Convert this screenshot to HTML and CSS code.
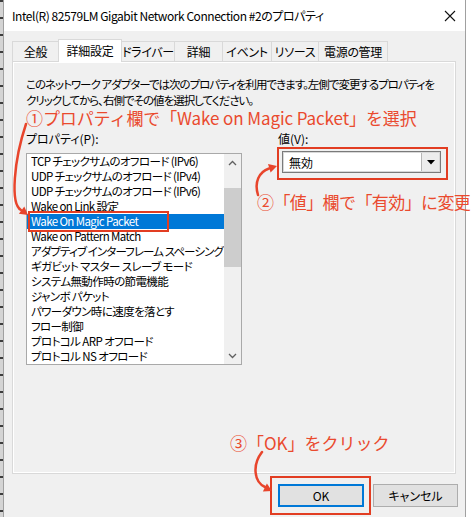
FILE: index.html
```html
<!DOCTYPE html>
<html lang="ja">
<head>
    <meta charset="UTF-8">
    <title>Intel(R) 82579LM Gigabit Network Connection #2のプロパティ</title>
    <link rel="stylesheet" href="styles.css">
</head>
<body>
    <div class="screen">
        <div class="edge"></div>
        <div class="dialog">
            <div class="titlebar">
                <span class="title">Intel(R) 82579LM Gigabit Network Connection #2のプロパティ</span>
                <svg class="close" width="12" height="12" viewBox="0 0 12 12">
                    <path d="M1 1 L11 11 M11 1 L1 11" stroke="#111" stroke-width="1.1" fill="none"/>
                </svg>
            </div>
            <div class="dialog-body">
                <div class="tabs">
                    <div class="tab t1">全般</div>
                    <div class="tab t2 active">詳細設定</div>
                    <div class="tab t3">ドライバー</div>
                    <div class="tab t4">詳細</div>
                    <div class="tab t5">イベント</div>
                    <div class="tab t6">リソース</div>
                    <div class="tab t7">電源の管理</div>
                </div>
                <div class="panel">
                    <p class="desc">このネットワーク アダプターでは次のプロパティを利用できます。左側で変更するプロパティを<br>クリックしてから、右側でその値を選択してください。</p>
                    <p class="note note-1">①プロパティ欄で「Wake on Magic Packet」を選択</p>
                    <div class="fields">
                        <div class="field-left">
                            <div class="label">プロパティ(P):</div>
                            <div class="listbox">
                                <ul class="items">
                                    <li>TCP チェックサムのオフロード (IPv6)</li>
                                    <li>UDP チェックサムのオフロード (IPv4)</li>
                                    <li>UDP チェックサムのオフロード (IPv6)</li>
                                    <li>Wake on Link 設定</li>
                                    <li class="selected">Wake On Magic Packet<span class="mark-item"></span></li>
                                    <li>Wake on Pattern Match</li>
                                    <li class="tight">アダプティブ インターフレーム スペーシング</li>
                                    <li>ギガビット マスター スレーブ モード</li>
                                    <li>システム無動作時の節電機能</li>
                                    <li>ジャンボ パケット</li>
                                    <li>パワーダウン時に速度を落とす</li>
                                    <li>フロー制御</li>
                                    <li>プロトコル ARP オフロード</li>
                                    <li>プロトコル NS オフロード</li>
                                </ul>
                                <div class="scrollbar">
                                    <div class="sb-btn">
                                        <svg width="9" height="6" viewBox="0 0 9 6"><path d="M1 5 L4.5 1.5 L8 5" stroke="#606060" stroke-width="1.3" fill="none"/></svg>
                                    </div>
                                    <div class="sb-track"><div class="sb-thumb"></div></div>
                                    <div class="sb-btn">
                                        <svg width="9" height="6" viewBox="0 0 9 6"><path d="M1 1 L4.5 4.5 L8 1" stroke="#606060" stroke-width="1.3" fill="none"/></svg>
                                    </div>
                                </div>
                            </div>
                        </div>
                        <div class="field-right">
                            <div class="label label-value">値(V):</div>
                            <div class="mark mark-combo">
                                <div class="combo">
                                    <span class="combo-text">無効</span>
                                    <span class="combo-btn">
                                        <svg width="8" height="5" viewBox="0 0 8 5"><path d="M0 0 H8 L4 4.5 Z" fill="#000"/></svg>
                                    </span>
                                </div>
                            </div>
                        </div>
                    </div>
                </div>
                <div class="buttons">
                    <div class="mark mark-ok">
                        <button class="btn btn-default">OK</button>
                    </div>
                    <button class="btn">キャンセル</button>
                </div>
            </div>
        </div>
        <div class="outside"></div>

        <!-- annotations drawn over the dialog -->
        <p class="note note-2">②「値」欄で「有効」に変更</p>
        <p class="note note-3">③「OK」をクリック</p>
        <svg class="arrows" width="474" height="517" viewBox="0 0 474 517">
            <g stroke="#e8452c" stroke-width="2.5" fill="none" stroke-linecap="round">
                <path d="M26 124 C14 160 10 204 21 210"/>
                <path d="M258 195 C254 182 259 172 269 168.5"/>
                <path d="M262 452 C252 465 254 482 265 487"/>
            </g>
            <g fill="#e8452c">
                <path d="M28 215 L18.9 213.8 L24.3 206.6 Z"/>
                <path d="M277 166 L270.6 172.6 L268 164 Z"/>
                <path d="M272 491 L262.9 491.4 L266.9 483.4 Z"/>
            </g>
        </svg>
    </div>
</body>
</html>
```

FILE: styles.css
```css
body {
    margin: 0;
    padding: 0;
    background-color: #fff;
    font-family: "Noto Sans CJK JP", sans-serif;
    font-size: 12px;
    color: #000;
}
.screen {
    position: relative;
    display: flex;
    width: 474px;
    height: 517px;
    overflow: hidden;
    background-color: #fff;
}
.edge {
    width: 3px;
    background: repeating-linear-gradient(#3d3d3d 0 2px, #d4d4d4 2px 17px);
}
.dialog {
    width: 463px;
    box-sizing: border-box;
    border-left: 1px solid #a0a0a0;
    border-right: 1px solid #a0a0a0;
    background-color: #f0f0f0;
    display: flex;
    flex-direction: column;
}
.outside {
    flex: 1;
    background-color: #fff;
}
.titlebar {
    height: 31px;
    background-color: #fff;
    display: flex;
    align-items: center;
    justify-content: space-between;
    padding: 0 8px 0 8px;
}
.title {
    font-size: 12px;
    font-feature-settings: "palt";
    letter-spacing: -0.45px;
    white-space: nowrap;
}
.close {
    margin-right: 1px;
}
.dialog-body {
    padding: 8px 9px 0 8px;
}

/* tabs */
.tabs {
    display: flex;
    align-items: flex-end;
    height: 22px;
    position: relative;
    z-index: 1;
}
.tab {
    box-sizing: border-box;
    height: 20px;
    border: 1px solid #d9d9d9;
    border-bottom: none;
    margin-left: -1px;
    background-color: #f0f0f0;
    display: flex;
    align-items: center;
    justify-content: center;
    font-feature-settings: "palt";
    letter-spacing: -0.3px;
    white-space: nowrap;
}
.tab.active {
    height: 23px;
    margin-bottom: -1px;
    background-color: #fff;
    position: relative;
    z-index: 2;
    padding-bottom: 1px;
}
.t1 { width: 47px; margin-left: 0; }
.t2 { width: 64px; }
.t3 { width: 54px; }
.t4 { width: 49px; }
.t5 { width: 50px; }
.t6 { width: 48px; }
.t7 { width: 70px; }

/* property page */
.panel {
    box-sizing: border-box;
    height: 413px;
    border: 1px solid #d9d9d9;
    box-shadow: inset 0 0 0 1px #fff;
    background-color: #f0f0f0;
    padding: 14px 13px 0 13px;
}
.desc {
    margin: 0;
    font-size: 11.5px;
    line-height: 16px;
    font-feature-settings: "palt";
    letter-spacing: -1px;
    white-space: nowrap;
}
.note {
    margin: 0;
    font-size: 17px;
    line-height: 18px;
    color: #ea4a2e;
    white-space: nowrap;
}
.note-1 {
    margin-top: 1px;
    letter-spacing: -0.1px;
}
.fields {
    display: grid;
    grid-template-columns: 216px 171px;
    column-gap: 35px;
    margin-top: 4px;
}
.label {
    line-height: 16px;
    font-feature-settings: "palt";
}
.label-value {
    padding-left: 1px;
}
.field-left .label {
    margin-bottom: 6px;
}

/* list box */
.listbox {
    box-sizing: border-box;
    height: 212px;
    border: 1px solid #a9a9a9;
    background-color: #fff;
    display: flex;
}
.items {
    flex: 1;
    list-style: none;
    margin: 0;
    padding: 0;
    overflow: hidden;
}
.items li {
    height: 15px;
    line-height: 15px;
    padding-left: 4px;
    font-size: 11.5px;
    white-space: nowrap;
    font-feature-settings: "palt";
    letter-spacing: -0.6px;
}
.items li.tight {
    letter-spacing: -0.9px;
}
.items li.selected {
    position: relative;
    background-color: #0078d7;
    color: #fff;
}
.mark-item {
    position: absolute;
    left: 1px;
    top: -3px;
    width: 141px;
    height: 21px;
    box-sizing: border-box;
    border: 2px solid #e23d22;
}
.scrollbar {
    width: 17px;
    background-color: #f0f0f0;
    display: flex;
    flex-direction: column;
}
.sb-btn {
    height: 17px;
    display: flex;
    align-items: center;
    justify-content: center;
}
.sb-track {
    flex: 1;
}
.sb-thumb {
    margin-top: 17px;
    height: 79px;
    background-color: #cdcdcd;
}

/* value combo */
.mark {
    border: 2px solid #e23d22;
}
.mark-combo {
    padding: 2px 5px 5px 3px;
}
.combo {
    box-sizing: border-box;
    height: 22px;
    border: 1px solid #7a7a7a;
    box-shadow: inset 0 0 0 1px #d8d8d8;
    background-color: #fff;
    display: flex;
    align-items: center;
    justify-content: space-between;
}
.combo-text {
    padding-left: 6px;
}
.combo-btn {
    width: 17px;
    height: 18px;
    margin-right: 1px;
    border-left: 1px solid #b5b5b5;
    background-color: #ececec;
    display: flex;
    align-items: center;
    justify-content: center;
}

/* dialog buttons */
.buttons {
    display: flex;
    justify-content: flex-end;
    align-items: center;
    margin-top: 2px;
    margin-right: -2px;
}
.mark-ok {
    padding: 6px 5px 6px 6px;
}
.btn {
    box-sizing: border-box;
    width: 85px;
    height: 23px;
    border: 1px solid #adadad;
    background-color: #e1e1e1;
    font-family: "Noto Sans CJK JP", sans-serif;
    font-size: 12px;
    font-feature-settings: "palt";
    padding: 0;
    margin-left: 2px;
}
.btn-default {
    width: 86px;
    margin-left: 0;
    border: 2px solid #0078d7;
}

/* annotation overlays */
.note-2 {
    position: absolute;
    left: 257px;
    top: 193px;
    letter-spacing: -0.6px;
}
.note-3 {
    position: absolute;
    left: 230px;
    top: 434px;
}
.arrows {
    position: absolute;
    left: 0;
    top: 0;
    pointer-events: none;
}
```
